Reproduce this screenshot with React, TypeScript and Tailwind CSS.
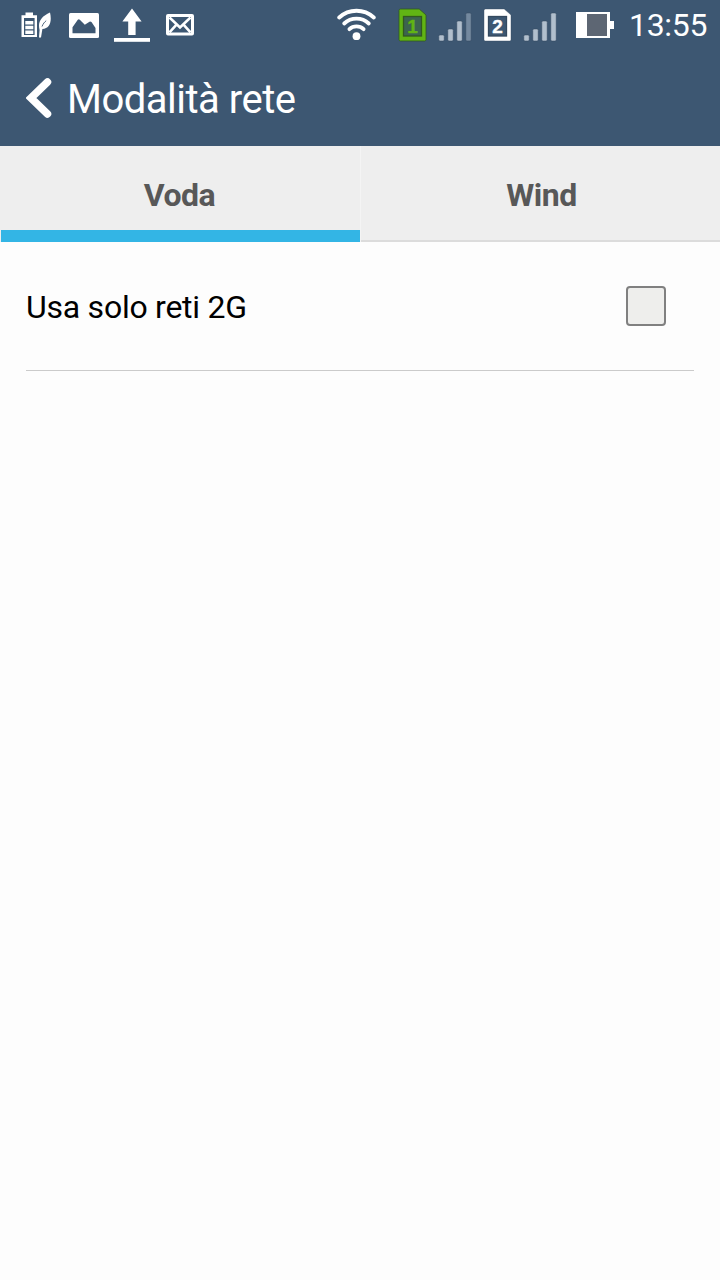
import { useState } from 'react';

const tabs = ['Voda', 'Wind'];

function BatterySaverIcon() {
  return (
    <svg className="w-[30px] h-[26px]" viewBox="0 0 30 26" fill="none">
      <path d="M4.5 0.5h7.5v2.8h4V25H0.5V3.3h4z" fill="#fff" />
      <path d="M3 6h10.6v17H3z" fill="#3d5772" />
      <path d="M4.3 9h8v3.6h-8zM4.3 13.7h8v3.6h-8zM4.3 18.4h8v3.6h-8z" fill="#fff" />
      <path d="M29 0.5c2.2 9.5-0.5 16-7.6 16.5l-1.4 8.5h-2l.6-7.5C16.5 10 20 4.5 29 0.5z" fill="#fff" />
      <path d="M21 14.5c1.2-3 2.600-4.500 4.200-5.800" stroke="#3d5772" strokeWidth="0.9" />
    </svg>
  );
}

function PictureIcon() {
  return (
    <svg className="w-[30px] h-[25px]" viewBox="0 0 30 25">
      <rect width="30" height="25" rx="1.5" fill="#fff" />
      <path d="M3.5 20.3v-6L8.8 6.7q1-.8 2 0l5 5 4.7-3q1-.4 2 .4l4 5.800v5.400z" fill="#3d5772" />
    </svg>
  );
}

function UploadIcon() {
  return (
    <svg className="w-9 h-[34px]" viewBox="0 0 36 34" fill="#fff">
      <path d="M18 0.5l9.6 13h-6V27h-7.4V13.5H8.4z" />
      <rect y="30" width="36" height="3.8" />
    </svg>
  );
}

function MailIcon() {
  return (
    <svg className="w-7 h-[22px]" viewBox="0 0 28 22" fill="none">
      <rect x="1.5" y="1.5" width="25" height="18.5" rx="0.5" stroke="#fff" strokeWidth="3" />
      <path d="M3.5 3.5L14 13.4 24.5 3.5M3.5 18.3l7-7.6M24.5 18.3l-7-7.6" stroke="#fff" strokeWidth="2.6" />
    </svg>
  );
}

function WifiIcon() {
  return (
    <svg className="w-10 h-[34px]" viewBox="0 0 40 34" fill="none">
      <circle cx="19.5" cy="28.2" r="3.9" fill="#fff" />
      <g stroke="#fff" strokeWidth="3.8" strokeLinecap="round">
        <path d="M2.2 9.5a25.5 25.5 0 0 1 34.6 0" />
        <path d="M7.2 15.5a18 18 0 0 1 24.6 0" />
        <path d="M12.4 21.2a10.4 10.4 0 0 1 14.2 0" />
      </g>
    </svg>
  );
}

interface SimIconProps {
  label: string;
  active?: boolean;
}

function SimIcon({ label, active }: SimIconProps) {
  const color = active ? '#61b414' : '#fff';
  const line = active ? '#31591f' : '#34495f';
  return (
    <svg className="w-[29px] h-[34px]" viewBox="0 0 29 34">
      <path
        d="M2.5 1h18.7l6.8 6v24.5a1.5 1.5 0 0 1-1.5 1.5h-24A1.5 1.5 0 0 1 1 31.5v-29A1.5 1.5 0 0 1 2.5 1z"
        fill={color}
        stroke={line}
        strokeWidth={active ? 0.8 : 0.4}
      />
      <rect x="5.5" y="8.5" width="18" height="19.500" fill={active ? '#3c6350' : '#3d5772'} stroke={line} strokeWidth="1.3" />
      <text
        x="14.5"
        y="25"
        textAnchor="middle"
        fontFamily="Liberation Sans, sans-serif"
        fontWeight="700"
        fontSize="19"
        fill={color}
        stroke={color}
        strokeWidth="0.4"
      >
        {label}
      </text>
    </svg>
  );
}

function SignalIcon({ bars }: { bars: number }) {
  return (
    <svg className="w-[34px] h-[30px]" viewBox="0 0 34 30">
      {[6, 12, 20, 28].map((h, i) => (
        <rect
          key={h}
          x={0.8 + i * 9}
          y={29 - h}
          width="5.4"
          height={h}
          rx="1.3"
          fill={i < bars ? '#b1bfcd' : '#74899f'}
          stroke="#34495f"
          strokeWidth="0.5"
        />
      ))}
    </svg>
  );
}

function BatteryIcon() {
  return (
    <svg className="w-[38px] h-[26px]" viewBox="0 0 38 26">
      <path d="M0 0h34v9h4v8h-4v9H0z" fill="#fff" />
      <rect x="11" y="2" width="20" height="22" fill="#5d6673" />
    </svg>
  );
}

export default function App() {
  const [activeTab, setActiveTab] = useState(0);
  const [only2g, setOnly2g] = useState(false);

  return (
    <div className="min-h-screen bg-[#fdfdfd] font-[Roboto,sans-serif]">
      {/* Status bar */}
      <div className="h-[50px] bg-[#3d5772] flex items-center justify-between pl-[21px] pr-3 text-white">
        <div className="flex items-center">
          <BatterySaverIcon />
          <div className="ml-[18px]">
            <PictureIcon />
          </div>
          <div className="ml-[15px]">
            <UploadIcon />
          </div>
          <div className="ml-4">
            <MailIcon />
          </div>
        </div>
        <div className="flex items-center">
          <WifiIcon />
          <div className="ml-[21px]">
            <SimIcon label="1" active />
          </div>
          <div className="ml-[11px] pt-1">
            <SignalIcon bars={3} />
          </div>
          <div className="ml-[11px]">
            <SimIcon label="2" />
          </div>
          <div className="ml-[11px] pt-1">
            <SignalIcon bars={4} />
          </div>
          <div className="ml-[19px]">
            <BatteryIcon />
          </div>
          <span className="ml-[15px] w-[79px] whitespace-nowrap text-[32px] leading-[50px] tracking-[-0.3px]">13:55</span>
        </div>
      </div>

      {/* Action bar */}
      <header className="h-24 bg-[#3d5772] flex items-center pl-[26px] text-white">
        <svg className="w-[26px] h-[42px]" viewBox="0 0 26 42" fill="none">
          <path d="M21.5 5L5 21l16.5 16" stroke="#fff" strokeWidth="7.5" strokeLinecap="round" />
        </svg>
        <h1 className="ml-[15px] pt-1 text-[40px] leading-none tracking-[-0.5px]">Modalità rete</h1>
      </header>

      {/* SIM tabs */}
      <nav className="h-24 flex bg-[#eeeeee]">
        {tabs.map((tab, i) => (
          <button
            key={tab}
            onClick={() => setActiveTab(i)}
            className={`flex-1 flex flex-col text-[32px] font-bold tracking-[-0.5px] text-[#585858] ${i > 0 ? 'border-l border-[#f4f4f4]' : 'pl-px'}`}
          >
            <span className={`h-[84px] w-full flex items-center justify-center pt-[14px] ${i > 0 ? 'pl-0.5' : 'pr-0.5'}`}>{tab}</span>
            <span className="h-3 w-full flex items-end">
              <span className={activeTab === i ? 'h-3 w-full bg-[#33b5e5]' : 'h-0.5 w-full bg-[#dcdcdc]'} />
            </span>
          </button>
        ))}
      </nav>

      <main className="px-[26px]">
        <label className="h-[129px] flex items-center justify-between pr-7 border-b border-[#cbcbcb]">
          <span className="pt-0.5 text-[32px] leading-none tracking-[-0.25px] text-black">Usa solo reti 2G</span>
          <input
            type="checkbox"
            checked={only2g}
            onChange={e => setOnly2g(e.target.checked)}
            className="appearance-none w-10 h-10 rounded border-2 border-[#808080] bg-[#eeeeec] checked:bg-[#33b5e5]"
          />
        </label>
      </main>
    </div>
  );
}
